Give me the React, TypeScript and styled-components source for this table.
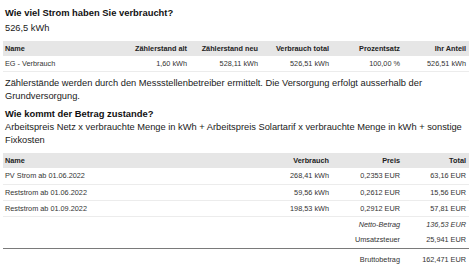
import React from "react";
import styled, { createGlobalStyle } from "styled-components";

const Global = createGlobalStyle`
  html, body { margin: 0; padding: 0; background: #ffffff; }
  body { font-family: "Liberation Sans", Arial, sans-serif; color: #111; }
`;

const Page = styled.div`
  width: 474px;
  padding: 7px 5px 0 3px;
  box-sizing: border-box;
  display: flex;
  flex-direction: column;
`;

const Heading = styled.h2<{ $top?: number }>`
  margin: ${(p) => p.$top ?? 0}px 0 0 2px;
  font-size: 9.4px;
  line-height: 12px;
  font-weight: 700;
  color: #111;
`;

const Text = styled.p<{ $top?: number }>`
  margin: ${(p) => p.$top ?? 0}px 0 0 2px;
  width: 464px;
  font-size: 9.3px;
  line-height: 12.5px;
  color: #1a1a1a;
`;

const Table = styled.table<{ $top?: number }>`
  margin-top: ${(p) => p.$top ?? 0}px;
  width: 466px;
  border-collapse: collapse;
  table-layout: fixed;
  font-size: 7.3px;
  color: #333;
`;

const HeadCell = styled.th<{ $w?: number; $align?: string }>`
  width: ${(p) => (p.$w ? `${p.$w}px` : "auto")};
  height: 15px;
  padding: 0 3px 0 2px;
  background: #e6e6e6;
  font-weight: 700;
  color: #222;
  text-align: ${(p) => p.$align ?? "right"};
  white-space: nowrap;
`;

const Row = styled.tr<{ $line?: boolean; $strong?: boolean }>`
  border-bottom: ${(p) => (p.$line ? "1px solid #ececec" : "none")};
  border-top: ${(p) => (p.$strong ? "1px solid #7a7a7a" : "none")};
`;

const Cell = styled.td<{ $align?: string; $italic?: boolean; $h?: number; $pt?: number }>`
  height: ${(p) => p.$h ?? 16}px;
  padding: ${(p) => p.$pt ?? 0}px 3px 0 2px;
  text-align: ${(p) => p.$align ?? "right"};
  font-style: ${(p) => (p.$italic ? "italic" : "normal")};
  white-space: nowrap;
  vertical-align: ${(p) => (p.$pt ? "top" : "middle")};
  box-sizing: border-box;
`;

const consumption = [
  { name: "EG - Verbrauch", alt: "1,60 kWh", neu: "528,11 kWh", total: "526,51 kWh", pct: "100,00 %", share: "526,51 kWh" },
];

const items = [
  { name: "PV Strom ab 01.06.2022", amount: "268,41 kWh", price: "0,2353 EUR", total: "63,16 EUR" },
  { name: "Reststrom ab 01.06.2022", amount: "59,56 kWh", price: "0,2612 EUR", total: "15,56 EUR" },
  { name: "Reststrom ab 01.09.2022", amount: "198,53 kWh", price: "0,2912 EUR", total: "57,81 EUR" },
];

export default function App() {
  return (
    <>
      <Global />
      <Page>
        <Heading>Wie viel Strom haben Sie verbraucht?</Heading>
        <Text $top={3}>526,5 kWh</Text>
        <Table $top={6}>
          <thead>
            <tr>
              <HeadCell $align="left">Name</HeadCell>
              <HeadCell $w={83}>Zählerstand alt</HeadCell>
              <HeadCell $w={66}>Zählerstand neu</HeadCell>
              <HeadCell $w={66}>Verbrauch total</HeadCell>
              <HeadCell $w={66}>Prozentsatz</HeadCell>
              <HeadCell $w={61}>Ihr Anteil</HeadCell>
            </tr>
          </thead>
          <tbody>
            {consumption.map((r) => (
              <Row key={r.name} $line>
                <Cell $align="left">{r.name}</Cell>
                <Cell>{r.alt}</Cell>
                <Cell>{r.neu}</Cell>
                <Cell>{r.total}</Cell>
                <Cell>{r.pct}</Cell>
                <Cell>{r.share}</Cell>
              </Row>
            ))}
          </tbody>
        </Table>
        <Text $top={5}>
          Zählerstände werden durch den Messstellenbetreiber ermittelt. Die Versorgung erfolgt ausserhalb der
          Grundversorgung.
        </Text>
        <Heading $top={6}>Wie kommt der Betrag zustande?</Heading>
        <Text $top={1}>
          Arbeitspreis Netz x verbrauchte Menge in kWh + Arbeitspreis Solartarif x verbrauchte Menge in kWh + sonstige
          Fixkosten
        </Text>
        <Table $top={7}>
          <thead>
            <tr>
              <HeadCell $align="left">Name</HeadCell>
              <HeadCell $w={66}>Verbrauch</HeadCell>
              <HeadCell $w={66}>Preis</HeadCell>
              <HeadCell $w={61}>Total</HeadCell>
            </tr>
          </thead>
          <tbody>
            {items.map((r) => (
              <Row key={r.name} $line>
                <Cell $align="left">{r.name}</Cell>
                <Cell>{r.amount}</Cell>
                <Cell>{r.price}</Cell>
                <Cell>{r.total}</Cell>
              </Row>
            ))}
            <Row>
              <Cell />
              <Cell />
              <Cell $italic>Netto-Betrag</Cell>
              <Cell $italic>136,53 EUR</Cell>
            </Row>
            <Row>
              <Cell />
              <Cell />
              <Cell>Umsatzsteuer</Cell>
              <Cell>25,941 EUR</Cell>
            </Row>
            <Row $strong>
              <Cell $h={18} $pt={6} />
              <Cell $h={18} $pt={6} />
              <Cell $h={18} $pt={6}>Bruttobetrag</Cell>
              <Cell $h={18} $pt={6}>162,471 EUR</Cell>
            </Row>
          </tbody>
        </Table>
      </Page>
    </>
  );
}
